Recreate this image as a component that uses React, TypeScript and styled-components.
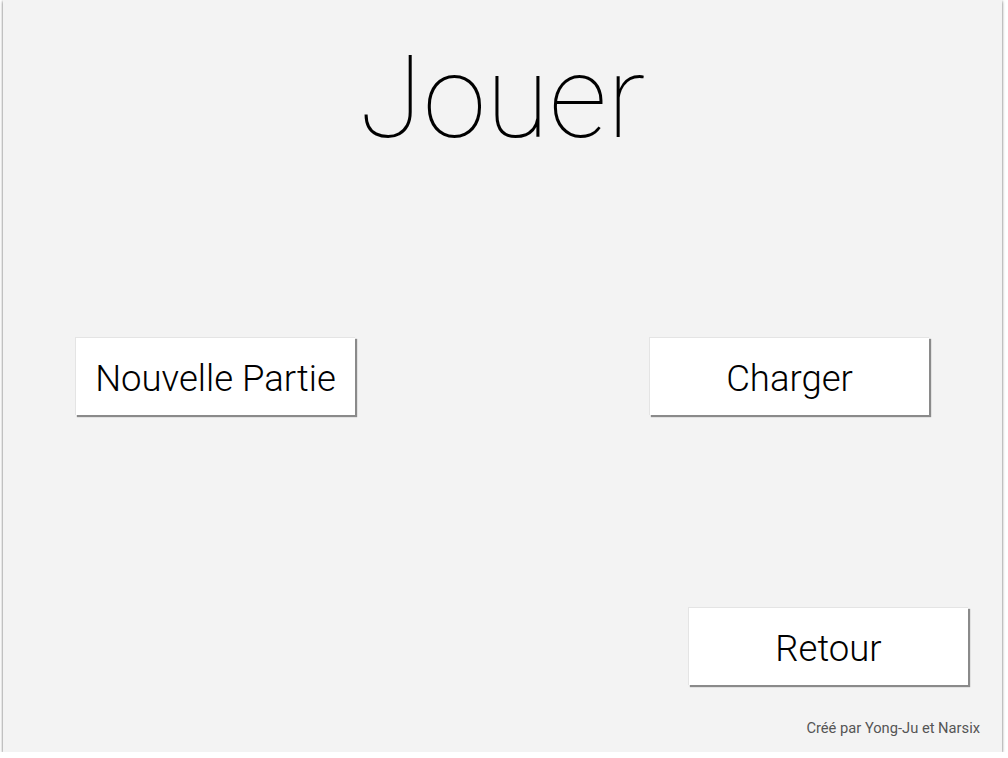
import React from "react";
import styled, { createGlobalStyle } from "styled-components";

const Global = createGlobalStyle`
  html, body { margin: 0; padding: 0; background: #ffffff; }
  body { font-family: "Roboto", "Liberation Sans", sans-serif; overflow: hidden; }
`;

const Panel = styled.div`
  box-sizing: border-box;
  margin-left: 3px;
  width: 999px;
  height: 752px;
  background: #f3f3f3;
  box-shadow: 0 1px 3px rgba(0, 0, 0, 0.55), 0 2px 2px rgba(0, 0, 0, 0.15);
  display: flex;
  flex-direction: column;
`;

const Title = styled.h1`
  margin: 36px 0 0;
  text-align: center;
  font-family: "Roboto", sans-serif;
  font-weight: 100;
  font-size: 115px;
  line-height: 124px;
  color: #000;
`;

const Row = styled.div<{ $align: string; $top: number; $right: number }>`
  display: flex;
  justify-content: ${(p) => p.$align};
  margin-top: ${(p) => p.$top}px;
  padding: 0 ${(p) => p.$right}px 0 72px;
`;

const Button = styled.button`
  box-sizing: border-box;
  width: 280px;
  height: 78px;
  background: #ffffff;
  border: 1px solid #e4e4e4;
  border-right: none;
  border-bottom: none;
  box-shadow: 2px 2px 1px #8a8a8a;
  font-family: "Roboto", sans-serif;
  font-weight: 300;
  font-size: 36.5px;
  color: #000;
  padding: 4px 0 0;
  cursor: pointer;
`;

const Footer = styled.div`
  margin-top: auto;
  padding: 0 22px 15px 0;
  text-align: right;
  font-family: "Roboto", sans-serif;
  font-size: 14.7px;
  color: #555;
`;

export default function App() {
  return (
    <>
      <Global />
      <Panel>
        <Title>Jouer</Title>
        <Row $align="space-between" $top={177} $right={73}>
          <Button>Nouvelle Partie</Button>
          <Button>Charger</Button>
        </Row>
        <Row $align="flex-end" $top={192} $right={34}>
          <Button>Retour</Button>
        </Row>
        <Footer>Créé par Yong-Ju et Narsix</Footer>
      </Panel>
    </>
  );
}
